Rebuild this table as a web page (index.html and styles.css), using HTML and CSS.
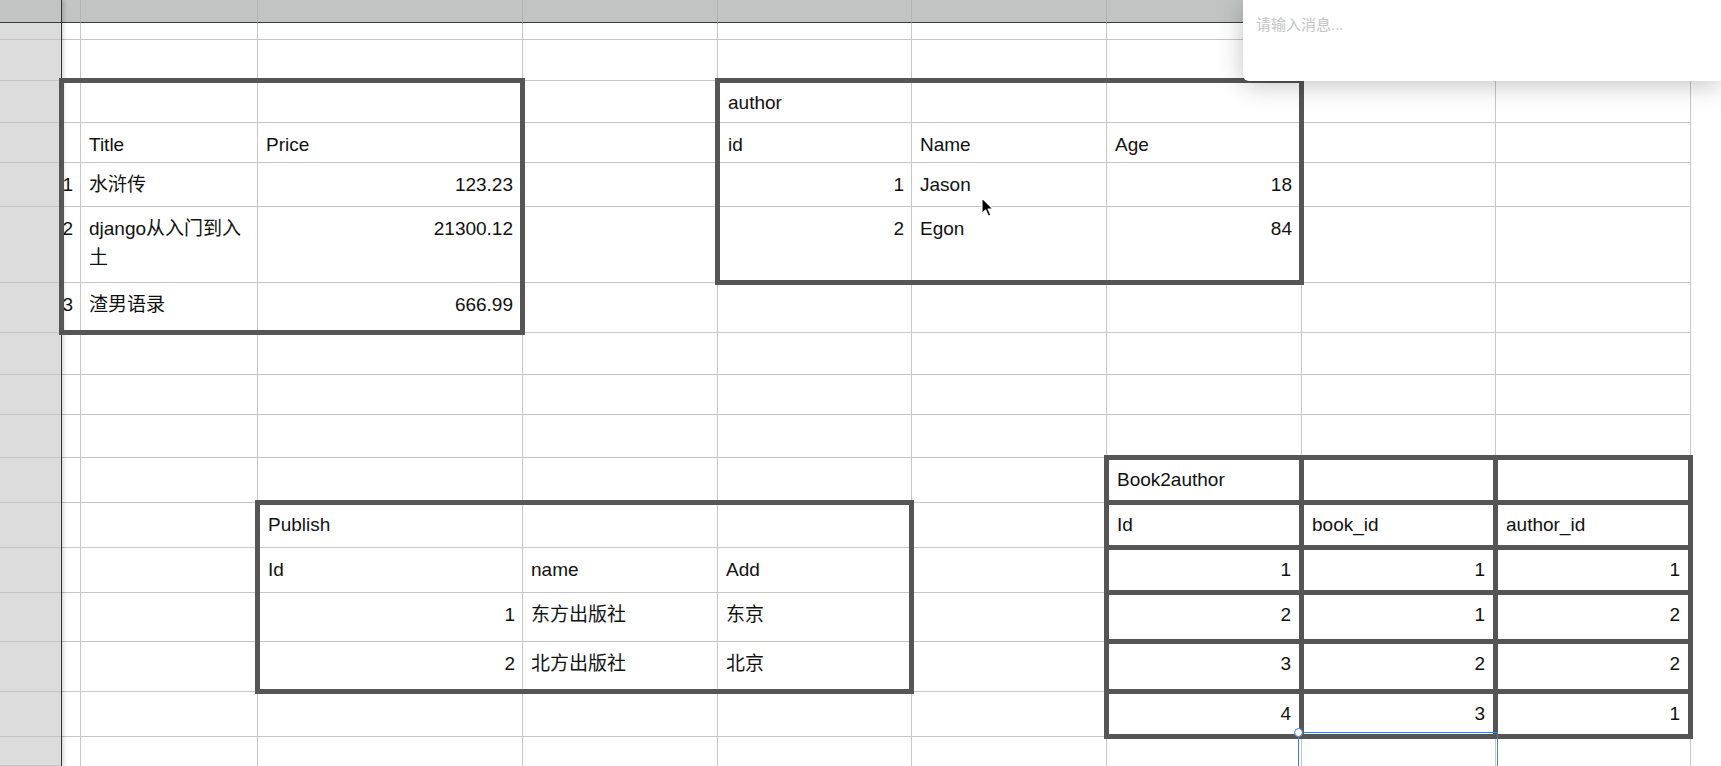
FILE: index.html
```html
<!DOCTYPE html>
<html lang="zh">
<head>
<meta charset="utf-8">
<title>Sheet</title>
<link rel="stylesheet" href="styles.css">
</head>
<body>
<div class="sheet">
  <div class="corner y1 x1"></div>
  <div class="colhead y1 x2"></div>
  <div class="colhead y1 x3"></div>
  <div class="colhead y1 x4"></div>
  <div class="colhead y1 x5"></div>
  <div class="colhead y1 x6"></div>
  <div class="colhead y1 x7"></div>
  <div class="colhead y1 x8"></div>
  <div class="colhead y1 x9"></div>
  <div class="colhead y1 x10"></div>
  <div class="colhead last y1 x11"></div>

  <div class="rowhead y2 x1"></div>
  <div class="rowhead y3 x1"></div>
  <div class="rowhead y4 x1"></div>
  <div class="rowhead y5 x1"></div>
  <div class="rowhead y6 x1"></div>
  <div class="rowhead y7 x1"></div>
  <div class="rowhead y8 x1"></div>
  <div class="rowhead y9 x1"></div>
  <div class="rowhead y10 x1"></div>
  <div class="rowhead y11 x1"></div>
  <div class="rowhead y12 x1"></div>
  <div class="rowhead y13 x1"></div>
  <div class="rowhead y14 x1"></div>
  <div class="rowhead y15 x1"></div>
  <div class="rowhead y16 x1"></div>
  <div class="rowhead y17 x1"></div>
  <div class="rowhead y18 x1"></div>

  <div class="vl x2"></div>
  <div class="vl x3"></div>
  <div class="vl x4"></div>
  <div class="vl x5"></div>
  <div class="vl x6"></div>
  <div class="vl x7"></div>
  <div class="vl x8"></div>
  <div class="vl x9"></div>
  <div class="vl x10"></div>

  <div class="hl y2"></div>
  <div class="hl y3"></div>
  <div class="hl y4"></div>
  <div class="hl y5"></div>
  <div class="hl y6"></div>
  <div class="hl y7"></div>
  <div class="hl y8"></div>
  <div class="hl y9"></div>
  <div class="hl y10"></div>
  <div class="hl y11"></div>
  <div class="hl y12"></div>
  <div class="hl y13"></div>
  <div class="hl y14"></div>
  <div class="hl y15"></div>
  <div class="hl y16"></div>
  <div class="hl y17"></div>

  <!-- book -->
  <div class="cell idx y6 x2">1</div>
  <div class="cell idx y7 x2">2</div>
  <div class="cell idx y8 x2">3</div>
  <div class="cell y5 x3">Title</div>
  <div class="cell tr y5 x4">Price</div>
  <div class="cell y6 x3">水浒传</div>
  <div class="cell num tr y6 x4">123.23</div>
  <div class="cell y7 x3">django从入门到入土</div>
  <div class="cell num tr y7 x4">21300.12</div>
  <div class="cell y8 x3">渣男语录</div>
  <div class="cell num tr y8 x4">666.99</div>

  <!-- author -->
  <div class="cell tl y4 x6">author</div>
  <div class="cell tl y5 x6">id</div>
  <div class="cell y5 x7">Name</div>
  <div class="cell tr y5 x8">Age</div>
  <div class="cell num tl y6 x6">1</div>
  <div class="cell y6 x7">Jason</div>
  <div class="cell num tr y6 x8">18</div>
  <div class="cell num tl y7 x6">2</div>
  <div class="cell y7 x7">Egon</div>
  <div class="cell num tr y7 x8">84</div>

  <!-- publish -->
  <div class="cell tl y13 x4">Publish</div>
  <div class="cell tl y14 x4">Id</div>
  <div class="cell y14 x5">name</div>
  <div class="cell tr y14 x6">Add</div>
  <div class="cell num tl y15 x4">1</div>
  <div class="cell y15 x5">东方出版社</div>
  <div class="cell tr y15 x6">东京</div>
  <div class="cell num tl y16 x4">2</div>
  <div class="cell y16 x5">北方出版社</div>
  <div class="cell tr y16 x6">北京</div>

  <div class="edge"></div>

  <div class="frame frame-book"></div>
  <div class="frame frame-author"></div>
  <div class="frame frame-publish"></div>

  <!-- book2author -->
  <div class="box y12 x8">Book2author</div>
  <div class="box y12 x9"></div>
  <div class="box y12 x10"></div>
  <div class="box y13 x8">Id</div>
  <div class="box y13 x9">book_id</div>
  <div class="box y13 x10">author_id</div>
  <div class="box num y14 x8">1</div>
  <div class="box num y14 x9">1</div>
  <div class="box num y14 x10">1</div>
  <div class="box num y15 x8">2</div>
  <div class="box num y15 x9">1</div>
  <div class="box num y15 x10">2</div>
  <div class="box num y16 x8">3</div>
  <div class="box num y16 x9">2</div>
  <div class="box num y16 x10">2</div>
  <div class="box num y17 x8">4</div>
  <div class="box num y17 x9">3</div>
  <div class="box num y17 x10">1</div>

  <div class="selection y18 x9"><span class="handle"></span></div>
</div>

<div class="popup">
  <div class="placeholder">请输入消息...</div>
</div>

<svg class="cursor" width="14" height="21" viewBox="0 0 14 21">
  <path d="M1 1 L1 16.5 L4.7 13 L7.4 19.2 L9.8 18.1 L7.1 12 L12 12 Z" fill="#000" stroke="#fff" stroke-width="1.1" stroke-linejoin="round"/>
</svg>
</body>
</html>
```

FILE: styles.css
```css
* { box-sizing: border-box; margin: 0; padding: 0; }
html, body { width: 1721px; height: 766px; overflow: hidden; background: #fff; }
body {
  position: relative;
  font-family: "Liberation Sans", "Noto Sans CJK SC", sans-serif;
  color: #111;
}

.sheet {
  display: grid;
  grid-template-columns: 62px 19px 177px 265px 195px 194px 195px 195px 194px 195px 1fr;
  grid-template-rows: 23px 17px 41px 42px 40px 44px 76px 50px 42px 40px 43px 45px 45px 45px 49px 50px 45px 1fr;
  height: 766px;
}

.y1 { grid-row: 1; } .y2 { grid-row: 2; } .y3 { grid-row: 3; } .y4 { grid-row: 4; }
.y5 { grid-row: 5; } .y6 { grid-row: 6; } .y7 { grid-row: 7; } .y8 { grid-row: 8; }
.y9 { grid-row: 9; } .y10 { grid-row: 10; } .y11 { grid-row: 11; } .y12 { grid-row: 12; }
.y13 { grid-row: 13; } .y14 { grid-row: 14; } .y15 { grid-row: 15; } .y16 { grid-row: 16; }
.y17 { grid-row: 17; } .y18 { grid-row: 18; }

.x1 { grid-column: 1; } .x2 { grid-column: 2; } .x3 { grid-column: 3; } .x4 { grid-column: 4; }
.x5 { grid-column: 5; } .x6 { grid-column: 6; } .x7 { grid-column: 7; } .x8 { grid-column: 8; }
.x9 { grid-column: 9; } .x10 { grid-column: 10; } .x11 { grid-column: 11; }

.corner, .colhead {
  background: #c2c4c3;
  border-bottom: 1px solid #3c3c3c;
}
.colhead { border-right: 1px solid #b3b5b4; }
.colhead.last { border-right: 0; }

.rowhead {
  background: #dcdcdc;
  border-bottom: 1px solid #c4c4c4;
}

.edge {
  grid-column: 1;
  grid-row: 1 / -1;
  border-right: 1px solid #333;
  box-shadow: 2px 0 4px rgba(0, 0, 0, 0.16);
}

.vl { grid-row: 2 / -1; border-right: 1px solid #c6c6c6; }
.hl { grid-column: 2 / 11; border-bottom: 1px solid #c6c6c6; }

.cell {
  font-size: 19px;
  line-height: 29px;
  padding: 7px 8px 0;
}
.num { text-align: right; }
.tl { padding-left: 10px; }
.tr { padding-right: 10px; }
.idx {
  display: flex;
  justify-content: flex-end;
  padding: 7px 8px 0 0;
}

.frame {
  margin: -3px -2px -2px -3px;
  border: 5px solid #555;
}
.frame-book { grid-row: 4 / 9; grid-column: 2 / 5; }
.frame-author { grid-row: 4 / 8; grid-column: 6 / 9; }
.frame-publish { grid-row: 13 / 17; grid-column: 4 / 7; }

.box {
  margin: -3px -2px -2px -3px;
  border: 5px solid #555;
  padding: 5px 8px 0;
  font-size: 19px;
  line-height: 29px;
}

.selection {
  position: relative;
  margin: -5px -2px 0 -4px;
  border: 1px solid #4a80c8;
  border-bottom: 0;
}
.handle {
  position: absolute;
  left: -5px;
  top: -5px;
  width: 9px;
  height: 9px;
  border-radius: 50%;
  background: #fff;
  border: 1.5px solid #4a80c8;
}

.popup {
  position: absolute;
  top: 0;
  right: 0;
  width: 478px;
  height: 81px;
  background: #fff;
  border-bottom-left-radius: 6px;
  box-shadow: 0 4px 26px rgba(0, 0, 0, 0.24);
  padding: 14px 13px 0;
}
.placeholder {
  font-family: "Liberation Sans", "Noto Sans CJK SC", sans-serif;
  font-size: 15px;
  line-height: 22px;
  color: #c4c4c4;
}

.cursor {
  position: absolute;
  left: 981px;
  top: 197px;
}
```
